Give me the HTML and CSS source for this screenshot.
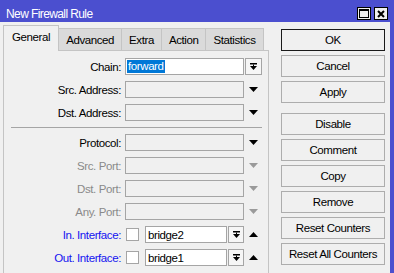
FILE: index.html
```html
<!DOCTYPE html>
<html lang="en">
<head>
  <meta charset="UTF-8">
  <title>New Firewall Rule</title>
  <link rel="stylesheet" href="styles.css">
</head>
<body>
  <div class="window">
    <div class="titlebar">
      <span class="title">New Firewall Rule</span>
      <div class="title-buttons">
        <span class="tbtn">
          <svg width="10" height="9" viewBox="0 0 10 9"><rect x="0.5" y="0.5" width="9" height="8" fill="none" stroke="#000"/><rect x="0" y="0" width="10" height="2" fill="#000"/></svg>
        </span>
        <span class="tbtn">
          <svg width="8" height="8" viewBox="0 0 8 8"><path d="M1 1 L7 7 M7 1 L1 7" stroke="#000" stroke-width="2"/></svg>
        </span>
      </div>
    </div>

    <div class="main">
      <div class="left">
        <div class="tabs">
          <div class="tab active">General</div>
          <div class="tab">Advanced</div>
          <div class="tab">Extra</div>
          <div class="tab">Action</div>
          <div class="tab">Statistics</div>
        </div>

        <div class="panel">
          <div class="row">
            <label class="label">Chain:</label>
            <div class="field"><span class="selected">forward</span></div>
            <div class="side"><span class="drop">
              <svg width="7" height="7" viewBox="0 0 7 7"><rect x="0" y="0" width="7" height="1.5" fill="#000"/><rect x="3" y="1.5" width="1" height="2" fill="#000"/><path d="M0 3 H7 L3.5 7 Z" fill="#000"/></svg>
            </span></div>
          </div>
          <div class="row">
            <label class="label">Src. Address:</label>
            <div class="field disabled"></div>
            <div class="side"><svg width="9" height="5" viewBox="0 0 9 5"><path d="M0 0 H9 L4.5 5 Z" fill="#000"/></svg></div>
          </div>
          <div class="row">
            <label class="label">Dst. Address:</label>
            <div class="field disabled"></div>
            <div class="side"><svg width="9" height="5" viewBox="0 0 9 5"><path d="M0 0 H9 L4.5 5 Z" fill="#000"/></svg></div>
          </div>

          <div class="separator"></div>

          <div class="row">
            <label class="label">Protocol:</label>
            <div class="field disabled"></div>
            <div class="side"><svg width="9" height="5" viewBox="0 0 9 5"><path d="M0 0 H9 L4.5 5 Z" fill="#000"/></svg></div>
          </div>
          <div class="row">
            <label class="label muted">Src. Port:</label>
            <div class="field disabled"></div>
            <div class="side"><svg width="9" height="5" viewBox="0 0 9 5"><path d="M0 0 H9 L4.5 5 Z" fill="#9a9a9a"/></svg></div>
          </div>
          <div class="row">
            <label class="label muted">Dst. Port:</label>
            <div class="field disabled"></div>
            <div class="side"><svg width="9" height="5" viewBox="0 0 9 5"><path d="M0 0 H9 L4.5 5 Z" fill="#9a9a9a"/></svg></div>
          </div>
          <div class="row">
            <label class="label muted">Any. Port:</label>
            <div class="field disabled"></div>
            <div class="side"><svg width="9" height="5" viewBox="0 0 9 5"><path d="M0 0 H9 L4.5 5 Z" fill="#9a9a9a"/></svg></div>
          </div>
          <div class="row">
            <label class="label link">In. Interface:</label>
            <div class="combo">
              <span class="check"></span>
              <div class="field small">bridge2</div>
              <span class="drop">
                <svg width="7" height="7" viewBox="0 0 7 7"><rect x="0" y="0" width="7" height="1.5" fill="#000"/><rect x="3" y="1.5" width="1" height="2" fill="#000"/><path d="M0 3 H7 L3.5 7 Z" fill="#000"/></svg>
              </span>
            </div>
            <div class="side"><svg width="9" height="5" viewBox="0 0 9 5"><path d="M0 5 H9 L4.5 0 Z" fill="#000"/></svg></div>
          </div>
          <div class="row">
            <label class="label link">Out. Interface:</label>
            <div class="combo">
              <span class="check"></span>
              <div class="field small">bridge1</div>
              <span class="drop">
                <svg width="7" height="7" viewBox="0 0 7 7"><rect x="0" y="0" width="7" height="1.5" fill="#000"/><rect x="3" y="1.5" width="1" height="2" fill="#000"/><path d="M0 3 H7 L3.5 7 Z" fill="#000"/></svg>
              </span>
            </div>
            <div class="side"><svg width="9" height="5" viewBox="0 0 9 5"><path d="M0 5 H9 L4.5 0 Z" fill="#000"/></svg></div>
          </div>
        </div>
      </div>

      <div class="actions">
        <button class="btn default">OK</button>
        <button class="btn">Cancel</button>
        <button class="btn">Apply</button>
        <button class="btn group">Disable</button>
        <button class="btn">Comment</button>
        <button class="btn">Copy</button>
        <button class="btn">Remove</button>
        <button class="btn">Reset Counters</button>
        <button class="btn">Reset All Counters</button>
      </div>
    </div>
  </div>
</body>
</html>
```

FILE: styles.css
```css
body {
  margin: 0;
  font-family: "Liberation Sans", Arial, sans-serif;
  font-size: 11.5px;
  letter-spacing: -0.4px;
  color: #000;
  background: #f0f0f0;
}

.window {
  width: 394px;
  height: 273px;
  box-sizing: border-box;
  background: #f0f0f0;
  border-right: 4px solid #4b4fcf;
  overflow: hidden;
}

.titlebar {
  height: 22px;
  box-sizing: border-box;
  padding: 5px 6px 0 6px;
  margin-right: -4px;
  background: #4b4fcf;
  color: #fff;
  display: flex;
  align-items: center;
}

.title {
  font-size: 12px;
  letter-spacing: -0.6px;
}

.title-buttons {
  margin-left: auto;
  display: flex;
  gap: 3px;
}

.tbtn {
  width: 14px;
  height: 13px;
  box-sizing: border-box;
  border: 1px solid #000;
  background: #f0f0f0;
  display: flex;
  align-items: center;
  justify-content: center;
}

.main {
  display: flex;
}

.left {
  width: 266px;
  margin-left: 3px;
}

.tabs {
  display: flex;
  align-items: flex-end;
  height: 28px;
  box-sizing: border-box;
  padding-top: 3px;
  position: relative;
  z-index: 1;
}

.tab {
  height: 22px;
  box-sizing: border-box;
  padding: 0 7px;
  display: flex;
  align-items: center;
  background: #dadada;
  border: 1px solid #c4c4c4;
  border-bottom: none;
  border-left: none;
}

.tab.active {
  height: 26px;
  margin-bottom: -1px;
  padding: 0 8px 3px 8px;
  background: #f0f0f0;
  border: 1px solid #c4c4c4;
  border-bottom: none;
}

.panel {
  height: 230px;
  box-sizing: border-box;
  border: 1px solid #c4c4c4;
  border-bottom: none;
  padding-top: 7px;
}

.row {
  display: flex;
  align-items: center;
  height: 17px;
  margin-bottom: 6px;
}

.label {
  width: 117px;
  margin-right: 4px;
  text-align: right;
}

.label.muted {
  color: #8a8a8a;
}

.label.link {
  color: #1414f0;
}

.field {
  width: 119px;
  height: 17px;
  box-sizing: border-box;
  border: 1px solid #a5a5a5;
  background: #fff;
  padding-left: 1px;
  display: flex;
  align-items: center;
}

.field.disabled {
  background: #f0f0f0;
}

.field.small {
  width: 82px;
  padding-left: 2px;
}

.selected {
  background: #0078d7;
  color: #fff;
  padding: 0 1px 1px 1px;
}

.side {
  width: 17px;
  height: 17px;
  margin-left: 1px;
  display: flex;
  align-items: center;
  justify-content: center;
}

.drop {
  width: 17px;
  height: 17px;
  box-sizing: border-box;
  border: 1px solid #a5a5a5;
  background: #f6f6f6;
  display: flex;
  align-items: center;
  justify-content: center;
}

.combo {
  width: 119px;
  display: flex;
  align-items: center;
}

.combo .drop {
  width: 16px;
  margin-left: 1px;
}

.check {
  width: 13px;
  height: 13px;
  box-sizing: border-box;
  margin-left: 1px;
  margin-right: 6px;
  border: 1px solid #a5a5a5;
  background: #fff;
}

.separator {
  height: 1px;
  background: #a5a5a5;
  margin: 2px 6px 6px 7px;
}

.actions {
  width: 104px;
  margin-left: 12px;
  padding-top: 7px;
  display: flex;
  flex-direction: column;
}

.btn {
  height: 22px;
  margin: 0 0 4px 0;
  padding: 0;
  border: 1px solid #adadad;
  background: #f0f0f0;
  font-family: inherit;
  font-size: 11.5px;
  letter-spacing: -0.4px;
  color: #000;
}

.btn.default {
  border-color: #1a1a1a;
}

.btn.group {
  margin-top: 6px;
}
```
